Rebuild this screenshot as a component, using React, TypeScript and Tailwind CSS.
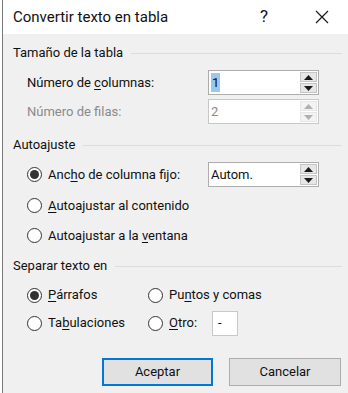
import type { ReactNode } from "react";

const font = { fontFamily: 'Roboto, "Noto Sans", sans-serif' };

function SectionTitle({ children }: { children: ReactNode }) {
    return (
        <div className="flex h-[20px] items-center gap-[8px] pl-[10px] pr-[6px]">
            <span className="whitespace-nowrap text-[13px] text-[#111]">{children}</span>
            <div className="h-px flex-1 bg-[#dcdcdc]" />
        </div>
    );
}

function Radio({ checked = false }: { checked?: boolean }) {
    return (
        <span className="flex h-[15px] w-[15px] shrink-0 items-center justify-center rounded-full border border-[#333] bg-white">
            {checked && <span className="h-[9px] w-[9px] rounded-full bg-[#333]" />}
        </span>
    );
}

function SpinBox({ value, disabled = false, selected = false }: { value: string; disabled?: boolean; selected?: boolean }) {
    const arrow = disabled ? "#b0b0b0" : "#1a1a1a";
    return (
        <div className={`flex h-[25px] w-[111px] border ${disabled ? "border-[#c8c8c8]" : "border-[#adadad]"} bg-white`}>
            <div className="flex flex-1 items-center pl-[2px] text-[13px]">
                <span className={selected ? "bg-[#99c9ef] px-px text-[#111]" : disabled ? "text-[#8a8a8a]" : "text-[#111]"}>{value}</span>
            </div>
            <div className="flex w-[18px] flex-col gap-px py-px pr-px">
                <div className={`flex flex-1 items-center justify-center border ${disabled ? "border-[#e6e6e6] bg-[#f3f3f3]" : "border-[#c6c6c6] bg-[#e6e6e6]"}`}>
                    <svg width="9" height="5" viewBox="0 0 9 5"><path d="M0 5L4.5 0L9 5Z" fill={arrow} /></svg>
                </div>
                <div className={`flex flex-1 items-center justify-center border ${disabled ? "border-[#e6e6e6] bg-[#f3f3f3]" : "border-[#c6c6c6] bg-[#e6e6e6]"}`}>
                    <svg width="9" height="5" viewBox="0 0 9 5"><path d="M0 0L9 0L4.5 5Z" fill={arrow} /></svg>
                </div>
            </div>
        </div>
    );
}

export default function App() {
    return (
        <div className="h-[393px] w-[348px] bg-white pl-[2px]" style={font}>
            <div className="flex h-full flex-col border-l border-[#7a7a7a]">
                {/* title bar */}
                <div className="flex h-[34px] items-center bg-white pl-[10px]">
                    <span className="flex-1 text-[15px] text-[#111]">Convertir texto en tabla</span>
                    <span className="w-[18px] text-[17px] text-[#111]">?</span>
                    <span className="ml-[36px] mr-[18px] flex w-[16px] items-center justify-center">
                        <svg width="14" height="14" viewBox="0 0 14 14"><path d="M1 1L13 13M13 1L1 13" stroke="#1a1a1a" strokeWidth="1.2" /></svg>
                    </span>
                </div>

                <div className="flex flex-1 flex-col bg-[#f0f0f0] pt-[9px]">
                    <SectionTitle>Tamaño de la tabla</SectionTitle>
                    <div className="mt-[7px] flex items-center pl-[24px]">
                        <span className="w-[181px] text-[13px] text-[#111]">
                            Número de <span className="underline underline-offset-2">c</span>olumnas:
                        </span>
                        <SpinBox value="1" selected />
                    </div>
                    <div className="mt-[4px] flex items-center pl-[24px]">
                        <span className="w-[181px] text-[13px] text-[#8a8a8a]">Número de filas:</span>
                        <SpinBox value="2" disabled />
                    </div>

                    <div className="mt-[11px]">
                        <SectionTitle>Autoajuste</SectionTitle>
                    </div>
                    <div className="mt-[7px] flex items-center pl-[24px]">
                        <div className="flex w-[181px] items-center gap-[6px] text-[13px] text-[#111]">
                            <Radio checked />
                            <span>
                                Anc<span className="underline underline-offset-2">h</span>o de columna fijo:
                            </span>
                        </div>
                        <SpinBox value="Autom." />
                    </div>
                    <div className="mt-[7px] flex h-[23px] items-center gap-[6px] pl-[24px] text-[13px] text-[#111]">
                        <Radio />
                        <span>
                            <span className="underline underline-offset-2">A</span>utoajustar al contenido
                        </span>
                    </div>
                    <div className="mt-[7px] flex h-[23px] items-center gap-[6px] pl-[24px] text-[13px] text-[#111]">
                        <Radio />
                        <span>
                            Autoajustar a la <span className="underline underline-offset-2">v</span>entana
                        </span>
                    </div>

                    <div className="mt-[9px]">
                        <SectionTitle>Separar texto en</SectionTitle>
                    </div>
                    <div className="mt-[7px] grid grid-cols-[121px_1fr] gap-y-[4px] pl-[24px] text-[13px] text-[#111]">
                        <div className="flex h-[24px] items-center gap-[6px]">
                            <Radio checked />
                            <span>
                                <span className="underline underline-offset-2">P</span>árrafos
                            </span>
                        </div>
                        <div className="flex h-[24px] items-center gap-[6px]">
                            <Radio />
                            <span>
                                Pu<span className="underline underline-offset-2">n</span>tos y comas
                            </span>
                        </div>
                        <div className="flex h-[24px] items-center gap-[6px]">
                            <Radio />
                            <span>
                                Ta<span className="underline underline-offset-2">b</span>ulaciones
                            </span>
                        </div>
                        <div className="flex h-[24px] items-center gap-[6px]">
                            <Radio />
                            <span className="w-[37px]">
                                <span className="underline underline-offset-2">O</span>tro:
                            </span>
                            <div className="flex h-[25px] w-[26px] items-center border border-[#c8c8c8] bg-white pl-[5px]">-</div>
                        </div>
                    </div>

                    <div className="mt-[23px] flex justify-end gap-[16px] pr-[7px]">
                        <button className="h-[28px] w-[111px] border-2 border-[#0078d7] bg-[#e1e1e1] text-[13px] text-[#111]">Aceptar</button>
                        <button className="h-[28px] w-[112px] border border-[#adadad] bg-[#e1e1e1] text-[13px] text-[#111]">Cancelar</button>
                    </div>
                </div>
            </div>
        </div>
    );
}
